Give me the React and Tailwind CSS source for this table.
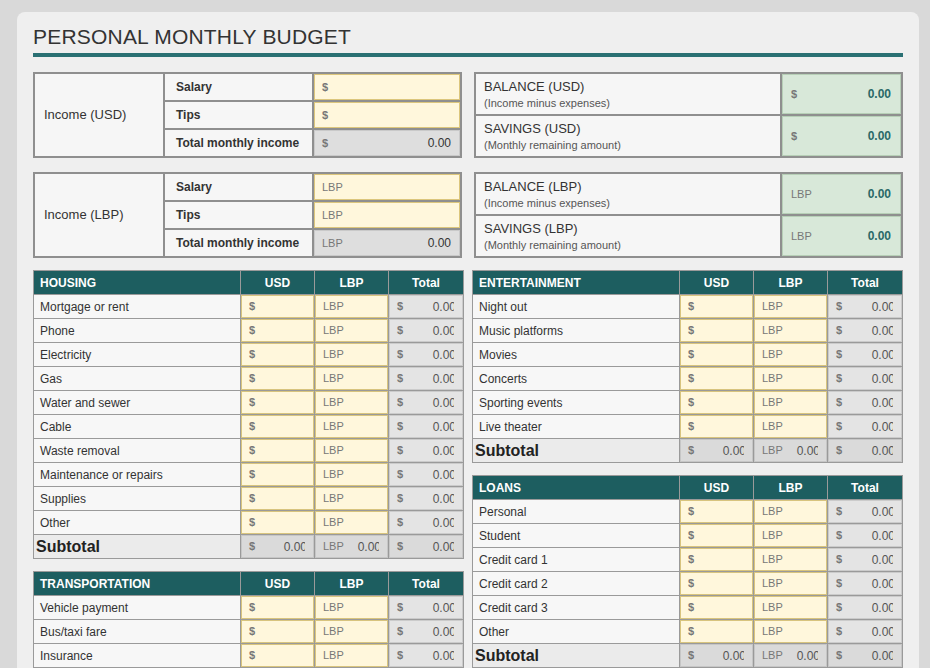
import React from 'react';

const housing = ['Mortgage or rent', 'Phone', 'Electricity', 'Gas', 'Water and sewer', 'Cable', 'Waste removal', 'Maintenance or repairs', 'Supplies', 'Other'];
const transportation = ['Vehicle payment', 'Bus/taxi fare', 'Insurance', 'Licensing', 'Fuel', 'Maintenance', 'Other'];
const entertainment = ['Night out', 'Music platforms', 'Movies', 'Concerts', 'Sporting events', 'Live theater'];
const loans = ['Personal', 'Student', 'Credit card 1', 'Credit card 2', 'Credit card 3', 'Other'];

function Unit({ unit }) {
  return <span className={unit === '$' ? 'text-[11px] font-bold text-[#777]' : 'text-[11px] text-[#777]'}>{unit}</span>;
}

// amount that runs past the right edge of its cell, like the sheet does
function Clipped({ prefix }) {
  return (
    <div className="flex h-full items-center pl-[7px] pr-[8px]">
      <Unit unit={prefix} />
      <div className="flex flex-1 justify-end overflow-hidden">
        <span className="-mr-[2px] shrink-0 text-[12px] text-[#555]">0.00</span>
      </div>
    </div>
  );
}

function BudgetTable({ title, rows }) {
  return (
    <div className="grid grid-cols-[206px_73px_73px_74px] auto-rows-[23px] gap-px bg-[#9a9a9a] p-px">
      <div className="flex items-center bg-[#1d5e60] px-[6px] text-[12px] font-bold text-white">{title}</div>
      <div className="flex items-center justify-center bg-[#1d5e60] text-[12px] font-bold text-white">USD</div>
      <div className="flex items-center justify-center bg-[#1d5e60] text-[12px] font-bold text-white">LBP</div>
      <div className="flex items-center justify-center bg-[#1d5e60] text-[12px] font-bold text-white">Total</div>
      {rows.map(r => (
        <React.Fragment key={r}>
          <div className="flex items-center bg-[#f7f7f7] px-[6px] text-[12px] text-[#333]">{r}</div>
          <div className="flex items-center border border-[#d8c47e] bg-[#fff7dc] px-[7px]">
            <Unit unit="$" />
          </div>
          <div className="flex items-center border border-[#d8c47e] bg-[#fff7dc] px-[7px]">
            <Unit unit="LBP" />
          </div>
          <div className="border border-[#cbcbcb] bg-[#e4e4e4]">
            <Clipped prefix="$" />
          </div>
        </React.Fragment>
      ))}
      <div className="flex items-center bg-[#ebebeb] px-[2px] text-[16px] font-bold text-[#222]">Subtotal</div>
      <div className="border border-[#c6c6c6] bg-[#dadada]">
        <Clipped prefix="$" />
      </div>
      <div className="border border-[#c6c6c6] bg-[#dadada]">
        <Clipped prefix="LBP" />
      </div>
      <div className="border border-[#c6c6c6] bg-[#dadada]">
        <Clipped prefix="$" />
      </div>
    </div>
  );
}

function IncomeBox({ label, unit }) {
  return (
    <div className="grid grid-cols-[128px_147px_146px] grid-rows-[26px_26px_26px] gap-[2px] bg-[#8f8f8f] p-[2px]">
      <div className="row-span-3 flex items-center bg-[#f6f6f6] pl-[9px] text-[13px] text-[#333]">{label}</div>
      <div className="flex items-center bg-[#f6f6f6] pl-[11px] text-[12px] font-bold text-[#333]">Salary</div>
      <div className="flex items-center border border-[#dcc67c] bg-[#fff7dc] pl-[7px]">
        <Unit unit={unit} />
      </div>
      <div className="flex items-center bg-[#f6f6f6] pl-[11px] text-[12px] font-bold text-[#333]">Tips</div>
      <div className="flex items-center border border-[#dcc67c] bg-[#fff7dc] pl-[7px]">
        <Unit unit={unit} />
      </div>
      <div className="flex items-center bg-[#f6f6f6] pl-[11px] text-[12px] font-bold text-[#333]">Total monthly income</div>
      <div className="flex items-center justify-between border border-[#c9c9c9] bg-[#dedede] pl-[7px] pr-[8px]">
        <Unit unit={unit} />
        <span className="text-[12px] text-[#333]">0.00</span>
      </div>
    </div>
  );
}

function BalanceBox({ cur, unit }) {
  const items = [
    [`BALANCE (${cur})`, '(Income minus expenses)'],
    [`SAVINGS (${cur})`, '(Monthly remaining amount)'],
  ];
  return (
    <div className="grid grid-cols-[304px_119px] grid-rows-[40px_40px] gap-[2px] bg-[#8f8f8f] p-[2px]">
      {items.map(([t, s]) => (
        <React.Fragment key={t}>
          <div className="flex flex-col justify-center bg-[#f6f6f6] pl-[8px]">
            <span className="text-[13px] leading-[16px] text-[#333]">{t}</span>
            <span className="mt-px text-[11px] leading-[14px] text-[#555]">{s}</span>
          </div>
          <div className="flex items-center justify-between border border-[#b7cfb7] bg-[#d8e8d9] pl-[8px] pr-[9px]">
            <Unit unit={unit} />
            <span className="text-[12px] font-bold text-[#2a6868]">0.00</span>
          </div>
        </React.Fragment>
      ))}
    </div>
  );
}

export default function App() {
  return (
    <div className="min-h-screen bg-[#d9d9d9] pt-[12px] font-['Liberation_Sans',Arial,sans-serif]">
      <div className="ml-[17px] w-[902px] rounded-lg bg-[#efefef] px-4 pt-[11px] pb-6">
        <h1 className="border-b-4 border-[#2a7073] pb-[2px] text-[21px] leading-[28px] tracking-[0.2px] text-[#333]">
          PERSONAL MONTHLY BUDGET
        </h1>

        <div className="mt-[15px] grid grid-cols-2 gap-x-[12px] gap-y-[14px]">
          <IncomeBox label="Income (USD)" unit="$" />
          <BalanceBox cur="USD" unit="$" />
          <IncomeBox label="Income (LBP)" unit="LBP" />
          <BalanceBox cur="LBP" unit="LBP" />
        </div>

        <div className="mt-[12px] grid grid-cols-2 items-start gap-x-[8px]">
          <div className="flex flex-col gap-[12px]">
            <BudgetTable title="HOUSING" rows={housing} />
            <BudgetTable title="TRANSPORTATION" rows={transportation} />
          </div>
          <div className="flex flex-col gap-[12px]">
            <BudgetTable title="ENTERTAINMENT" rows={entertainment} />
            <BudgetTable title="LOANS" rows={loans} />
          </div>
        </div>
      </div>
    </div>
  );
}
